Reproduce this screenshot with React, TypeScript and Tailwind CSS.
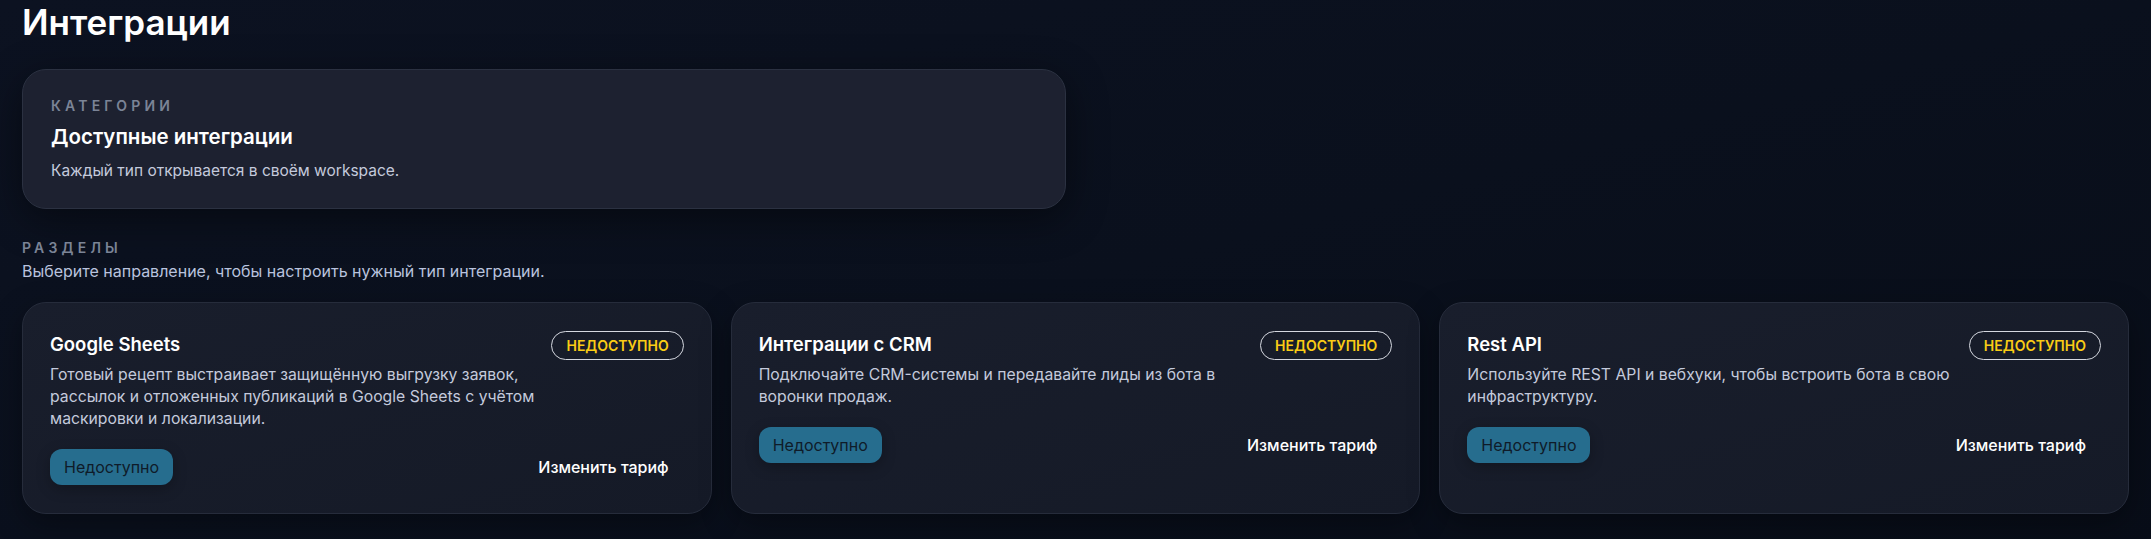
import React from 'react';

type Integration = {
  title: string;
  description: string;
};

const integrations: Integration[] = [
  {
    title: 'Google Sheets',
    description:
      'Готовый рецепт выстраивает защищённую выгрузку заявок, рассылок и отложенных публикаций в Google Sheets с учётом маскировки и локализации.',
  },
  {
    title: 'Интеграции с CRM',
    description: 'Подключайте CRM-системы и передавайте лиды из бота в воронки продаж.',
  },
  {
    title: 'Rest API',
    description: 'Используйте REST API и вебхуки, чтобы встроить бота в свою инфраструктуру.',
  },
];

function IntegrationCard({ item }: { item: Integration }) {
  return (
    <div className="flex flex-col rounded-[24px] border border-[#262c3b] bg-gradient-to-br from-[#191e2c] to-[#151a27] px-[27px] pt-[28px] pb-[28px] shadow-[0_10px_30px_rgba(0,0,0,0.35)]">
      {/* Header: title + description on the left, status badge on the right */}
      <div className="flex items-start gap-4">
        <div className="min-w-0 flex-1">
          <h3 className="text-[18.5px] leading-[26px] font-semibold text-white">{item.title}</h3>
          <p className="mt-[7px] text-[15.75px] leading-[22px] text-[#c4cadc]">{item.description}</p>
        </div>
        <span className="shrink-0 rounded-full border border-[#d5d8e0] px-[14px] py-[4px] text-[14px] leading-[19px] font-semibold uppercase text-[#facc15]">
          Недоступно
        </span>
      </div>

      {/* Actions */}
      <div className="mt-[19px] flex items-center justify-between">
        <button className="rounded-[12px] bg-[#266d8e] px-[14px] py-[6px] text-[16px] leading-[24px] text-[#0f1b29] shadow-[0_4px_14px_rgba(0,0,0,0.25)]">
          Недоступно
        </button>
        <button className="px-[15px] py-[6px] text-[16px] leading-[24px] font-medium text-white">
          Изменить тариф
        </button>
      </div>
    </div>
  );
}

export default function App() {
  return (
    <div className="min-h-screen bg-gradient-to-br from-[#0c1221] via-[#0a101d] to-[#080d18] px-[22px] pt-[1px] pb-10 font-['Inter',sans-serif]">
      <h1 className="text-[35px] leading-[42px] font-semibold text-white">Интеграции</h1>

      {/* Categories */}
      <div className="mt-[26px] grid grid-cols-2 gap-[19px]">
        <div className="rounded-[24px] border border-[#2b3141] bg-[#1d2130] px-[28px] pt-[27px] pb-[25px] shadow-[0_10px_40px_rgba(0,0,0,0.45)]">
          <p className="text-[14px] leading-[18px] font-semibold uppercase tracking-[0.3em] text-[#7b8496]">
            Категории
          </p>
          <h2 className="mt-[8px] text-[20.5px] leading-[28px] font-semibold text-white">Доступные интеграции</h2>
          <p className="mt-[8px] text-[15.5px] leading-[24px] text-[#c4cadc]">Каждый тип открывается в своём workspace.</p>
        </div>
      </div>

      {/* Sections */}
      <div className="mt-[30px]">
        <p className="text-[14px] leading-[18px] font-semibold uppercase tracking-[0.3em] text-[#7b8496]">
          Разделы
        </p>
        <p className="mt-[2px] text-[16px] leading-[24px] text-[#b9c3de]">
          Выберите направление, чтобы настроить нужный тип интеграции.
        </p>
      </div>

      <div className="mt-[19px] grid grid-cols-3 items-stretch gap-[19px]">
        {integrations.map((item) => (
          <IntegrationCard key={item.title} item={item} />
        ))}
      </div>
    </div>
  );
}
